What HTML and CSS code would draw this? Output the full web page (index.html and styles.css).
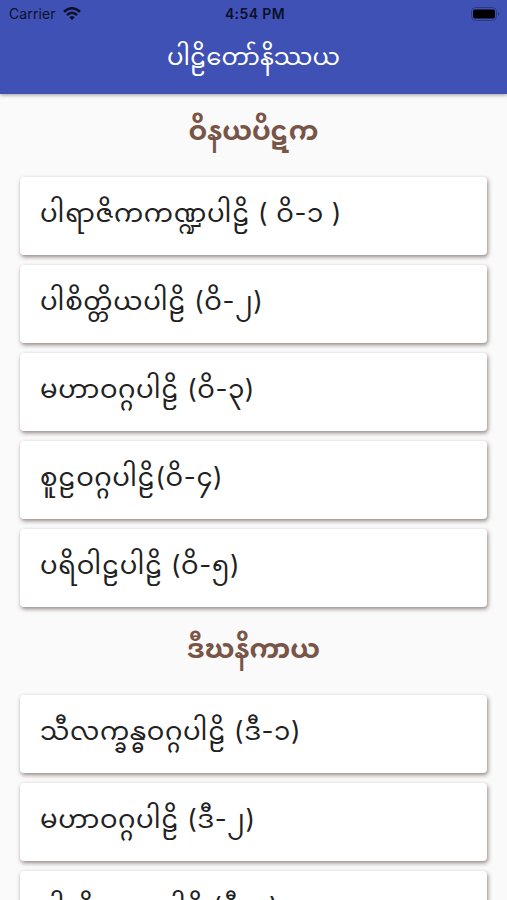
FILE: index.html
```
<!DOCTYPE html>
<html lang="my">
<head>
    <meta charset="UTF-8">
    <meta name="viewport" content="width=device-width, initial-scale=1.0">
    <title>ပါဠိတော်နိဿယ</title>
    <link rel="stylesheet" href="styles.css">
</head>
<body>
    <header class="app-bar">
        <div class="status-bar">
            <div class="carrier">
                <span>Carrier</span>
                <svg class="wifi" viewBox="0 0 18 14">
                    <path d="M1 4.7 Q9 -2.3 17 4.7 M4 8 Q9 3.4 14 8" />
                    <path class="dot" d="M6.3 10.2 Q9 8 11.7 10.2 L9 13 Z" />
                </svg>
            </div>
            <span class="time">4:54 PM</span>
            <svg class="battery" viewBox="0 0 30 14">
                <rect class="case" x="0.5" y="0.5" width="25" height="13" rx="4" />
                <rect x="2" y="2.5" width="22" height="9" rx="2" />
                <path class="tip" d="M27 5 Q30 7 27 9 Z" />
            </svg>
        </div>
        <h1>ပါဠိတော်နိဿယ</h1>
    </header>

    <main>
        <h2>ဝိနယပိဋက</h2>
        <div class="card">ပါရာဇိကကဏ္ဍပါဠိ ( ဝိ-၁ )</div>
        <div class="card">ပါစိတ္တိယပါဠိ (ဝိ-၂)</div>
        <div class="card">မဟာဝဂ္ဂပါဠိ (ဝိ-၃)</div>
        <div class="card">စူဠဝဂ္ဂပါဠိ(ဝိ-၄)</div>
        <div class="card">ပရိဝါဠပါဠိ (ဝိ-၅)</div>

        <h2>ဒီဃနိကာယ</h2>
        <div class="card">သီလက္ခန္ဓဝဂ္ဂပါဠိ (ဒီ-၁)</div>
        <div class="card">မဟာဝဂ္ဂပါဠိ (ဒီ-၂)</div>
        <div class="card">ပါထိကဝဂ္ဂပါဠိ (ဒီ-၃)</div>
    </main>
</body>
</html>
```
FILE: styles.css
```
* {
    box-sizing: border-box;
}
body {
    display: flex;
    flex-direction: column;
    margin: 0;
    height: 100vh;
    overflow: hidden;
    background: #fafafa;
    color: #212121;
    font-family: Inter, "Noto Sans Myanmar", "Noto Sans", sans-serif;
}
.app-bar {
    flex: none;
    height: 94px;
    background: #3f51b5;
    color: white;
    box-shadow: 0 1px 4px rgba(0, 0, 0, 0.4);
}
.status-bar {
    display: grid;
    grid-template-columns: 1fr auto 1fr;
    align-items: center;
    height: 27px;
    padding: 0 6px 0 9px;
    color: #0c1028;
    font-size: 14px;
    line-height: 27px;
}
.carrier {
    display: flex;
    align-items: center;
    gap: 7px;
    letter-spacing: 0.1px;
}
.wifi {
    width: 18px;
    height: 14px;
    fill: none;
    stroke: #0c1028;
    stroke-width: 2.5;
}
.wifi .dot {
    fill: #0c1028;
    stroke: none;
}
.time {
    font-weight: 600;
    letter-spacing: 0.4px;
}
.battery {
    justify-self: end;
    width: 30px;
    height: 14px;
}
.battery .case {
    fill: none;
    stroke: #2b3880;
}
.battery .tip {
    fill: #2b3880;
}
h1 {
    margin: 0;
    font-size: 24.4px;
    font-weight: 400;
    line-height: 58px;
    text-align: center;
}
main {
    flex: 1;
    min-height: 0;
    padding: 5px 20px 0;
    overflow: hidden;
}
h2 {
    height: 78px;
    margin: 0;
    color: #795548;
    font-size: 26.8px;
    font-weight: 700;
    line-height: 62px;
    text-align: center;
}
.card {
    height: 78px;
    margin-bottom: 10px;
    padding-left: 20px;
    border-radius: 4px;
    background: white;
    box-shadow: 1px 2px 4px rgba(62, 39, 35, 0.55);
    font-size: 26px;
    letter-spacing: 0.65px;
    line-height: 72px;
    white-space: nowrap;
}
```
